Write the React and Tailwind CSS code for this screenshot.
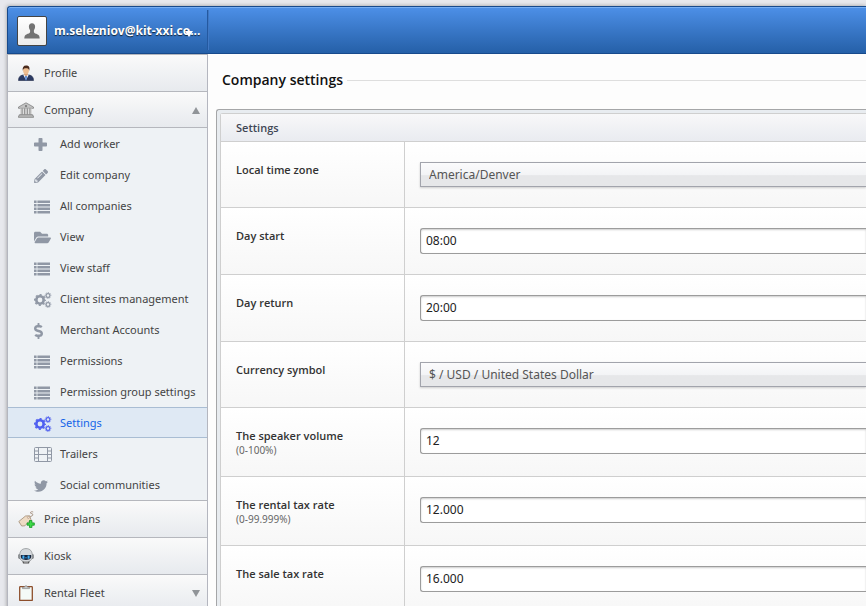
import { useState } from "react";
import { FaPencilAlt, FaFolderOpen, FaDollarSign, FaTwitter } from "react-icons/fa";

function PlusIcon() {
  return (
    <svg width="13" height="13" viewBox="0 0 13 13" fill="currentColor">
      <path d="M5.300 0h2.400q.8 0 .8.800v3.700h3.700q.8 0 .8.800v2.400q0 .8-.8.800H8.500v3.700q0 .8-.8.800H5.300q-.8 0-.8-.8V8.500H.8q-.8 0-.8-.8V5.300q0-.8.800-.8h3.700V.8q0-.8.800-.8z" />
    </svg>
  );
}

function ListIcon() {
  return (
    <svg width="16" height="14" viewBox="0 0 16 14" fill="currentColor">
      {[0.5, 4, 7.5, 11].map((y) => (
        <g key={y}>
          <rect x="0" y={y} width="2.600" height="2.500" />
          <rect x="3.400" y={y} width="12.600" height="2.500" />
        </g>
      ))}
    </svg>
  );
}

function CogsIcon() {
  return (
    <svg width="18" height="16" viewBox="0 0 18 16" fill="none" stroke="currentColor">
      <circle cx="6" cy="8" r="3.700" strokeWidth="2.600" />
      <circle cx="6" cy="8" r="5.300" strokeWidth="1.400" strokeDasharray="2.080 2.080" strokeDashoffset="1.040" />
      <circle cx="14" cy="3.500" r="1.900" strokeWidth="1.200" />
      <circle cx="14" cy="3.500" r="2.900" strokeWidth="1" strokeDasharray="1.140 1.140" strokeDashoffset=".57" />
      <circle cx="14" cy="12.500" r="1.900" strokeWidth="1.200" />
      <circle cx="14" cy="12.500" r="2.900" strokeWidth="1" strokeDasharray="1.140 1.140" strokeDashoffset=".57" />
    </svg>
  );
}

function FilmIcon() {
  return (
    <svg width="18" height="15" viewBox="0 0 18 15" fill="none" stroke="currentColor">
      <rect x="0.5" y="0.5" width="17" height="14" rx="1" />
      <path d="M4.500 .5v14M13.500 .5v14M4.500 7.500h9M.5 4h4M.5 7.500h4M.5 11h4M13.500 4h4M13.500 7.500h4M13.500 11h4" />
    </svg>
  );
}

function PersonIcon() {
  return (
    <svg width="16" height="16" viewBox="0 0 16 16">
      <path d="M.5 15.500c0-3.500 1.500-5 4.500-5.500h6c3 .5 4.500 2 4.500 5.500z" fill="#2b3a63" stroke="#1c2747" strokeWidth=".6" />
      <path d="M5.200 9.800 8 15l2.800-5.200z" fill="#f4f6fa" />
      <path d="m8 10.500 1 1-.6 4h-.8l-.6-4z" fill="#4a7fd0" />
      <path d="M6.300 8h3.400v2L8 11.300 6.300 10z" fill="#d79c70" />
      <ellipse cx="8" cy="5.500" rx="2.900" ry="3.700" fill="#edbd91" />
      <path d="M4.800 5.800C4.200 2.200 5.500.3 8.300.4c2.900 0 3.700 2.200 2.900 5.400-.4-1.900-1.200-2.500-3.200-2.500-1.800 0-2.800.6-3.200 2.500z" fill="#4a2a1c" />
    </svg>
  );
}

function BankIcon() {
  return (
    <svg width="16" height="16" viewBox="0 0 16 16">
      <path d="M8 .8 15.500 5v1.300H.5V5z" fill="#c4c4c4" stroke="#777" strokeWidth=".7" />
      <circle cx="8" cy="4.100" r="1.100" fill="#777" />
      <rect x="2" y="6.500" width="12" height="6.200" fill="#8a8a8a" />
      <path d="M2.800 6.500v6M5.400 6.500v6M8 6.500v6M10.600 6.500v6M13.200 6.500v6" stroke="#dedede" strokeWidth="1.500" />
      <path d="M1.300 12.700h13.400v1.200h.9v1.500H.4v-1.500h.9z" fill="#b5b5b5" stroke="#777" strokeWidth=".6" />
    </svg>
  );
}

function TagIcon() {
  return (
    <svg width="17" height="17" viewBox="0 0 17 17">
      <path d="M10.800 5.800c2.600-.4 4.500-1.200 4-2.500-.4-1-3-.6-2.300-1.900.4-.7 1.700-.9 2.700-.4" fill="none" stroke="#a59180" strokeWidth="1" />
      <path d="M.8 10.500 7.500 5l4.200-.2 1.200 3.700-6 6.300-3.200.2z" fill="#eedbc4" stroke="#a99580" strokeWidth=".9" />
      <circle cx="10.300" cy="6.600" r=".9" fill="#fff" stroke="#a07b60" strokeWidth=".5" />
      <path d="M11.500 9.500h2.400v2.400h2.400v2.300h-2.400v2.400h-2.400v-2.400H9.100v-2.300h2.400z" fill="#3ddb48" stroke="#149421" strokeWidth=".8" />
    </svg>
  );
}

function RobotIcon() {
  return (
    <svg width="16" height="16" viewBox="0 0 16 16">
      <path d="M4 12h8l-1 3.500H5z" fill="#555" />
      <rect x=".2" y="6" width="3" height="5" rx="1.400" fill="#7b7f83" />
      <rect x="12.800" y="6" width="3" height="5" rx="1.400" fill="#7b7f83" />
      <path d="M1.600 8C1.600 3 4 .6 8 .6S14.400 3 14.400 8c0 4-2.400 5.800-6.400 5.800S1.600 12 1.600 8z" fill="#d6d9dc" stroke="#85898d" strokeWidth=".7" />
      <path d="M2.800 7h10.400c.5 3.400-1.200 4.900-5.200 4.900S2.300 10.400 2.800 7z" fill="#18253c" />
      <path d="M5.400 7.600v3.200M10.600 7.600v3.200" stroke="#42aef4" strokeWidth="2" />
      <path d="M7 9.800h2" stroke="#2d7fc4" />
      <path d="M6 14h4" stroke="#bbb" />
    </svg>
  );
}

function ClipboardIcon() {
  return (
    <svg width="14" height="16" viewBox="0 0 14 16" className="ml-px">
      <rect x=".7" y="1.700" width="12.600" height="13.800" rx=".6" fill="#f4faf7" stroke="#8d4e2b" strokeWidth="1.300" />
      <path d="M3.500 3.600V2.200h1.900C5.600.3 8.400.3 8.600 2.200h1.900v1.400z" fill="#ccc" stroke="#777" strokeWidth=".6" />
    </svg>
  );
}

const submenu = [
  { label: "Add worker", icon: <PlusIcon /> },
  { label: "Edit company", icon: <FaPencilAlt size={14} /> },
  { label: "All companies", icon: <ListIcon /> },
  { label: "View", icon: <FaFolderOpen size={17} /> },
  { label: "View staff", icon: <ListIcon /> },
  { label: "Client sites management", icon: <CogsIcon /> },
  { label: "Merchant Accounts", icon: <FaDollarSign className="h-4 w-[9px]" /> },
  { label: "Permissions", icon: <ListIcon /> },
  { label: "Permission group settings", icon: <ListIcon /> },
  { label: "Settings", icon: <CogsIcon />, active: true },
  { label: "Trailers", icon: <FilmIcon /> },
  { label: "Social communities", icon: <FaTwitter size={14} /> },
];

const fields = [
  { id: "zone", label: "Local time zone", value: "America/Denver", select: true },
  { id: "start", label: "Day start", value: "08:00" },
  { id: "return", label: "Day return", value: "20:00" },
  { id: "currency", label: "Currency symbol", value: "$ / USD / United States Dollar", select: true },
  { id: "volume", label: "The speaker volume", note: "(0-100%)", value: "12" },
  { id: "rental", label: "The rental tax rate", note: "(0-99.999%)", value: "12.000" },
  { id: "sale", label: "The sale tax rate", value: "16.000" },
];

function Arrow({ up }) {
  return (
    <svg width="8" height="7" viewBox="0 0 8 7" fill="#909498">
      <path d={up ? "M4 0l4 7H0z" : "M0 0h8L4 7z"} />
    </svg>
  );
}

function MenuItem({ icon, label, arrow, open }) {
  return (
    <a
      href="#"
      className={
        "flex h-[37px] items-center border-t border-[#b5b7bd] bg-linear-to-b from-[#fafafa] to-[#e7eaee] pl-2.5 pr-[7px] " +
        (open ? "border-b pt-px" : "")
      }
    >
      <span className="flex w-[26px] items-center">{icon}</span>
      <span className="flex-1">{label}</span>
      {arrow && <Arrow up={open} />}
    </a>
  );
}

function Field({ id, label, note, value, select }) {
  const [current, setCurrent] = useState(value);
  const change = (event) => setCurrent(event.target.value);
  return (
    <div className="flex border-b border-[#cfcfcf] bg-linear-to-b from-white to-[#f7f7f7]">
      <label htmlFor={id} className="w-[184px] shrink-0 border-r border-[#cfcfcf] py-5 pl-[15px] font-['Open_Sans','Noto_Sans',sans-serif] leading-4 font-semibold text-[#333]">
        {label}
        {note && <span className="block font-['Noto_Sans',sans-serif] text-[10px] leading-3 font-normal text-[#666]">{note}</span>}
      </label>
      <div className="min-w-0 flex-1 py-5 pl-[15px]">
        {select ? (
          <select
            id={id}
            value={current}
            onChange={change}
            className="block h-[25px] w-full appearance-none border border-r-0 border-[#a2a4ac] bg-linear-to-b from-[#fbfbfc] from-0% via-[#f3f4f6] via-50% to-[#e6e7e9] to-55% pl-2 text-[12px] text-[#555] shadow-[0_1px_2px_#ccc]"
          >
            <option>{value}</option>
          </select>
        ) : (
          <input
            id={id}
            type="text"
            value={current}
            onChange={change}
            className="block h-[26px] w-full rounded-l-[3px] border border-r-0 border-[#9c9c9c] bg-white pb-0.5 pl-[5px] text-[12px] text-[#222] shadow-[inset_0_1px_2px_#ccc]"
          />
        )}
      </div>
    </div>
  );
}

export default function App() {
  return (
    <div className="h-screen overflow-hidden bg-[#e7e8ed] pt-1.5 pl-[7px] font-['Noto_Sans','Open_Sans',sans-serif] text-[11px] text-[#444]">
      <div className="shadow-[0_0_4px_#999]">
        <header className="flex h-12 rounded-tl-[3px] border border-r-0 border-[#174a8c] bg-linear-to-b from-[#4d90e8] to-[#2560a8] shadow-[inset_0_1px_0_#76adf2]">
          <button className="relative my-[3px] flex w-[200px] items-center gap-[7px] border-r border-[#2459a0] pt-px pl-[9px] font-['Open_Sans','Noto_Sans',sans-serif] text-[12px] font-bold text-white shadow-[1px_0_0_#4078c4] [text-shadow:0_1px_1px_#123]">
            <span className="flex size-[30px] items-center justify-center rounded-[2px] border border-[#444] bg-linear-to-b from-white to-[#ececec]">
              <svg width="16" height="16" viewBox="0 0 16 16" fill="#737373">
                <path d="M8 .3c2 0 3.100 1.300 3.100 3.300 0 1.700-.7 2.900-1.200 3.600v1.900c0 1.400 2 1.600 3.700 2.300 1.400.6 2 1.500 2.100 4H.3c.1-2.500.7-3.400 2.100-4 1.700-.7 3.700-.9 3.700-2.300V7.200c-.5-.7-1.200-1.900-1.200-3.600C4.900 1.600 6 .3 8 .3z" />
              </svg>
            </span>
            <span>m.selezniov@kit-xxi.co...</span>
            <svg className="absolute top-[21px] right-3.5" width="8" height="6" viewBox="0 0 8 6" fill="#fff">
              <path d="M0 0h8L4 6z" />
            </svg>
          </button>
        </header>

        <div className="flex">
          <nav className="w-[201px] shrink-0 border-x border-[#b4b6bf]">
            <MenuItem icon={<PersonIcon />} label="Profile" />
            <MenuItem icon={<BankIcon />} label="Company" arrow open />
            <ul className="bg-[#eef2f5]">
              {submenu.map(({ label, icon, active }) => (
                <li key={label}>
                  <a
                    href="#"
                    className={
                      "flex h-[31px] items-center pt-0.5 pl-[26px] " +
                      (active ? "border-y border-[#a9bdd3] bg-[#dfe9f4] text-[#1464e8]" : "")
                    }
                  >
                    <span className={"flex w-[26px] items-center " + (active ? "text-[#4f5ff0]" : "text-[#9098a5]")}>{icon}</span>
                    {label}
                  </a>
                </li>
              ))}
            </ul>
            <MenuItem icon={<TagIcon />} label="Price plans" />
            <MenuItem icon={<RobotIcon />} label="Kiosk" />
            <MenuItem icon={<ClipboardIcon />} label="Rental Fleet" arrow />
          </nav>

          <main className="min-w-0 flex-1 bg-[#fdfdfd] pt-4 pl-2">
            <h1 className="flex items-center gap-1 pl-[6px] font-['Open_Sans','Noto_Sans',sans-serif] text-[14px] leading-5 font-semibold text-[#111] after:h-px after:flex-1 after:bg-[#dedede]">
              Company settings
            </h1>
            <form className="mt-[19px] rounded-tl-[3px] border border-r-0 border-[#a5a6a8] bg-[#e8ecf0] pt-[3px] pl-[3px]">
              <div className="rounded-tl-[3px] border-t border-l border-[#cfcfcf]">
                <h2 className="h-7 border-b border-[#cfcfcf] bg-linear-to-b from-[#f8f8f9] to-[#e9ebf0] pl-[15px] font-['Open_Sans','Noto_Sans',sans-serif] leading-7 font-semibold text-[#3f4654]">
                  Settings
                </h2>
                {fields.map((field) => (
                  <Field key={field.id} {...field} />
                ))}
              </div>
            </form>
          </main>
        </div>
      </div>
    </div>
  );
}
